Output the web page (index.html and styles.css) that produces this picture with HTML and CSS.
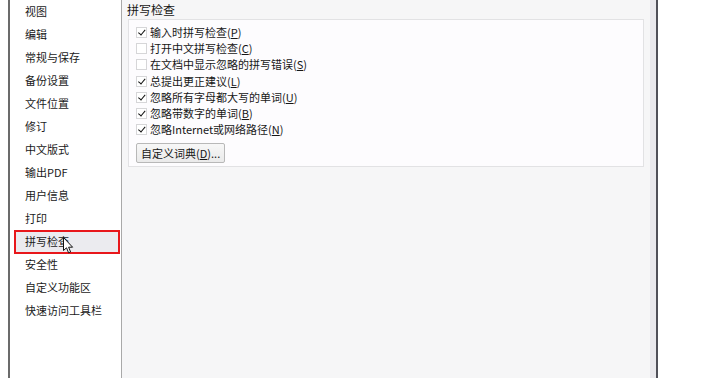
FILE: index.html
```html
<!DOCTYPE html>
<html lang="zh-CN">
<head>
    <meta charset="UTF-8">
    <title>选项 - 拼写检查</title>
    <link rel="stylesheet" href="styles.css">
</head>
<body>
    <div class="dialog">
        <ul class="nav">
            <li class="nav-item">视图</li>
            <li class="nav-item">编辑</li>
            <li class="nav-item">常规与保存</li>
            <li class="nav-item">备份设置</li>
            <li class="nav-item">文件位置</li>
            <li class="nav-item">修订</li>
            <li class="nav-item">中文版式</li>
            <li class="nav-item">输出PDF</li>
            <li class="nav-item">用户信息</li>
            <li class="nav-item">打印</li>
            <li class="nav-item selected">拼写检查
                <svg class="cursor" width="11" height="17" viewBox="0 0 11 17">
                    <path d="M0.5 0.5 L0.5 13.5 L3.5 10.8 L5.6 15.8 L7.6 14.9 L5.6 10.2 L9.6 10.2 Z" fill="#fff" stroke="#111" stroke-width="1" stroke-linejoin="round"/>
                </svg>
            </li>
            <li class="nav-item">安全性</li>
            <li class="nav-item">自定义功能区</li>
            <li class="nav-item">快速访问工具栏</li>
        </ul>

        <div class="content">
            <div class="section-title">拼写检查</div>
            <div class="panel">
                <label class="check-row"><span class="box checked"></span>输入时拼写检查(<u>P</u>)</label>
                <label class="check-row"><span class="box"></span>打开中文拼写检查(<u>C</u>)</label>
                <label class="check-row"><span class="box"></span>在文档中显示忽略的拼写错误(<u>S</u>)</label>
                <label class="check-row"><span class="box checked"></span>总提出更正建议(<u>L</u>)</label>
                <label class="check-row"><span class="box checked"></span>忽略所有字母都大写的单词(<u>U</u>)</label>
                <label class="check-row"><span class="box checked"></span>忽略带数字的单词(<u>B</u>)</label>
                <label class="check-row"><span class="box checked"></span>忽略Internet或网络路径(<u>N</u>)</label>
                <button class="dict-button">自定义词典(<u>D</u>)...</button>
            </div>
        </div>
        <div class="edge"></div>
    </div>
</body>
</html>
```

FILE: styles.css
```css
html, body {
    margin: 0;
    height: 100%;
}
body {
    background-color: #ffffff;
    font-family: "Noto Sans CJK SC", "Noto Sans", sans-serif;
    color: #161616;
    overflow: hidden;
}
.dialog {
    display: flex;
    width: 650px;
    height: 378px;
    margin-left: 8px;
    border-left: 2px solid #6b6b6b;
    border-right: 2px solid #505058;
    box-sizing: border-box;
}
.nav {
    list-style: none;
    margin: 0;
    padding: 0;
    width: 111px;
    flex-shrink: 0;
    background-color: #ffffff;
    border-right: 1px solid #a9a9a9;
}
.nav-item {
    position: relative;
    height: 23px;
    line-height: 19px;
    margin: 0 1px 0 4px;
    padding-left: 9px;
    border: 2px solid transparent;
    box-sizing: border-box;
    font-size: 11px;
    color: #1a1a1a;
}
.nav-item.selected {
    height: 24px;
    margin-bottom: -1px;
    border-color: #e8171b;
    background-color: #ebebef;
}
.cursor {
    position: absolute;
    left: 47px;
    top: 5px;
}
.content {
    flex: 1;
    background-color: #f6f6f7;
    padding: 0 6px 0 3px;
}
.section-title {
    font-size: 12px;
    line-height: 19px;
    padding-left: 2px;
}
.panel {
    background-color: #fdfcfe;
    border: 1px solid #e2e2e4;
    height: 148px;
    box-sizing: border-box;
    margin-left: 3px;
    padding: 4px 0 0 7px;
}
.check-row {
    display: flex;
    align-items: center;
    height: 16.3px;
    font-size: 11px;
    line-height: 15px;
}
.box {
    width: 9px;
    height: 9px;
    border: 1px solid #d6d6d8;
    background-color: #ffffff;
    margin-right: 3px;
    position: relative;
    flex-shrink: 0;
}
.box.checked::after {
    content: "";
    position: absolute;
    left: 3px;
    top: 0px;
    width: 2.5px;
    height: 5.5px;
    border: solid #111;
    border-width: 0 1.6px 1.6px 0;
    transform: rotate(40deg);
}
.dict-button {
    margin-top: 5px;
    height: 20px;
    padding: 0 4px;
    font-family: inherit;
    font-size: 11px;
    line-height: 18px;
    color: #161616;
    background: linear-gradient(#f7f7f7, #eaeaea);
    border: 1px solid #b8b8b8;
    border-radius: 2px;
}
.edge {
    width: 6px;
    flex-shrink: 0;
    background-color: #e9e8ec;
}
```
